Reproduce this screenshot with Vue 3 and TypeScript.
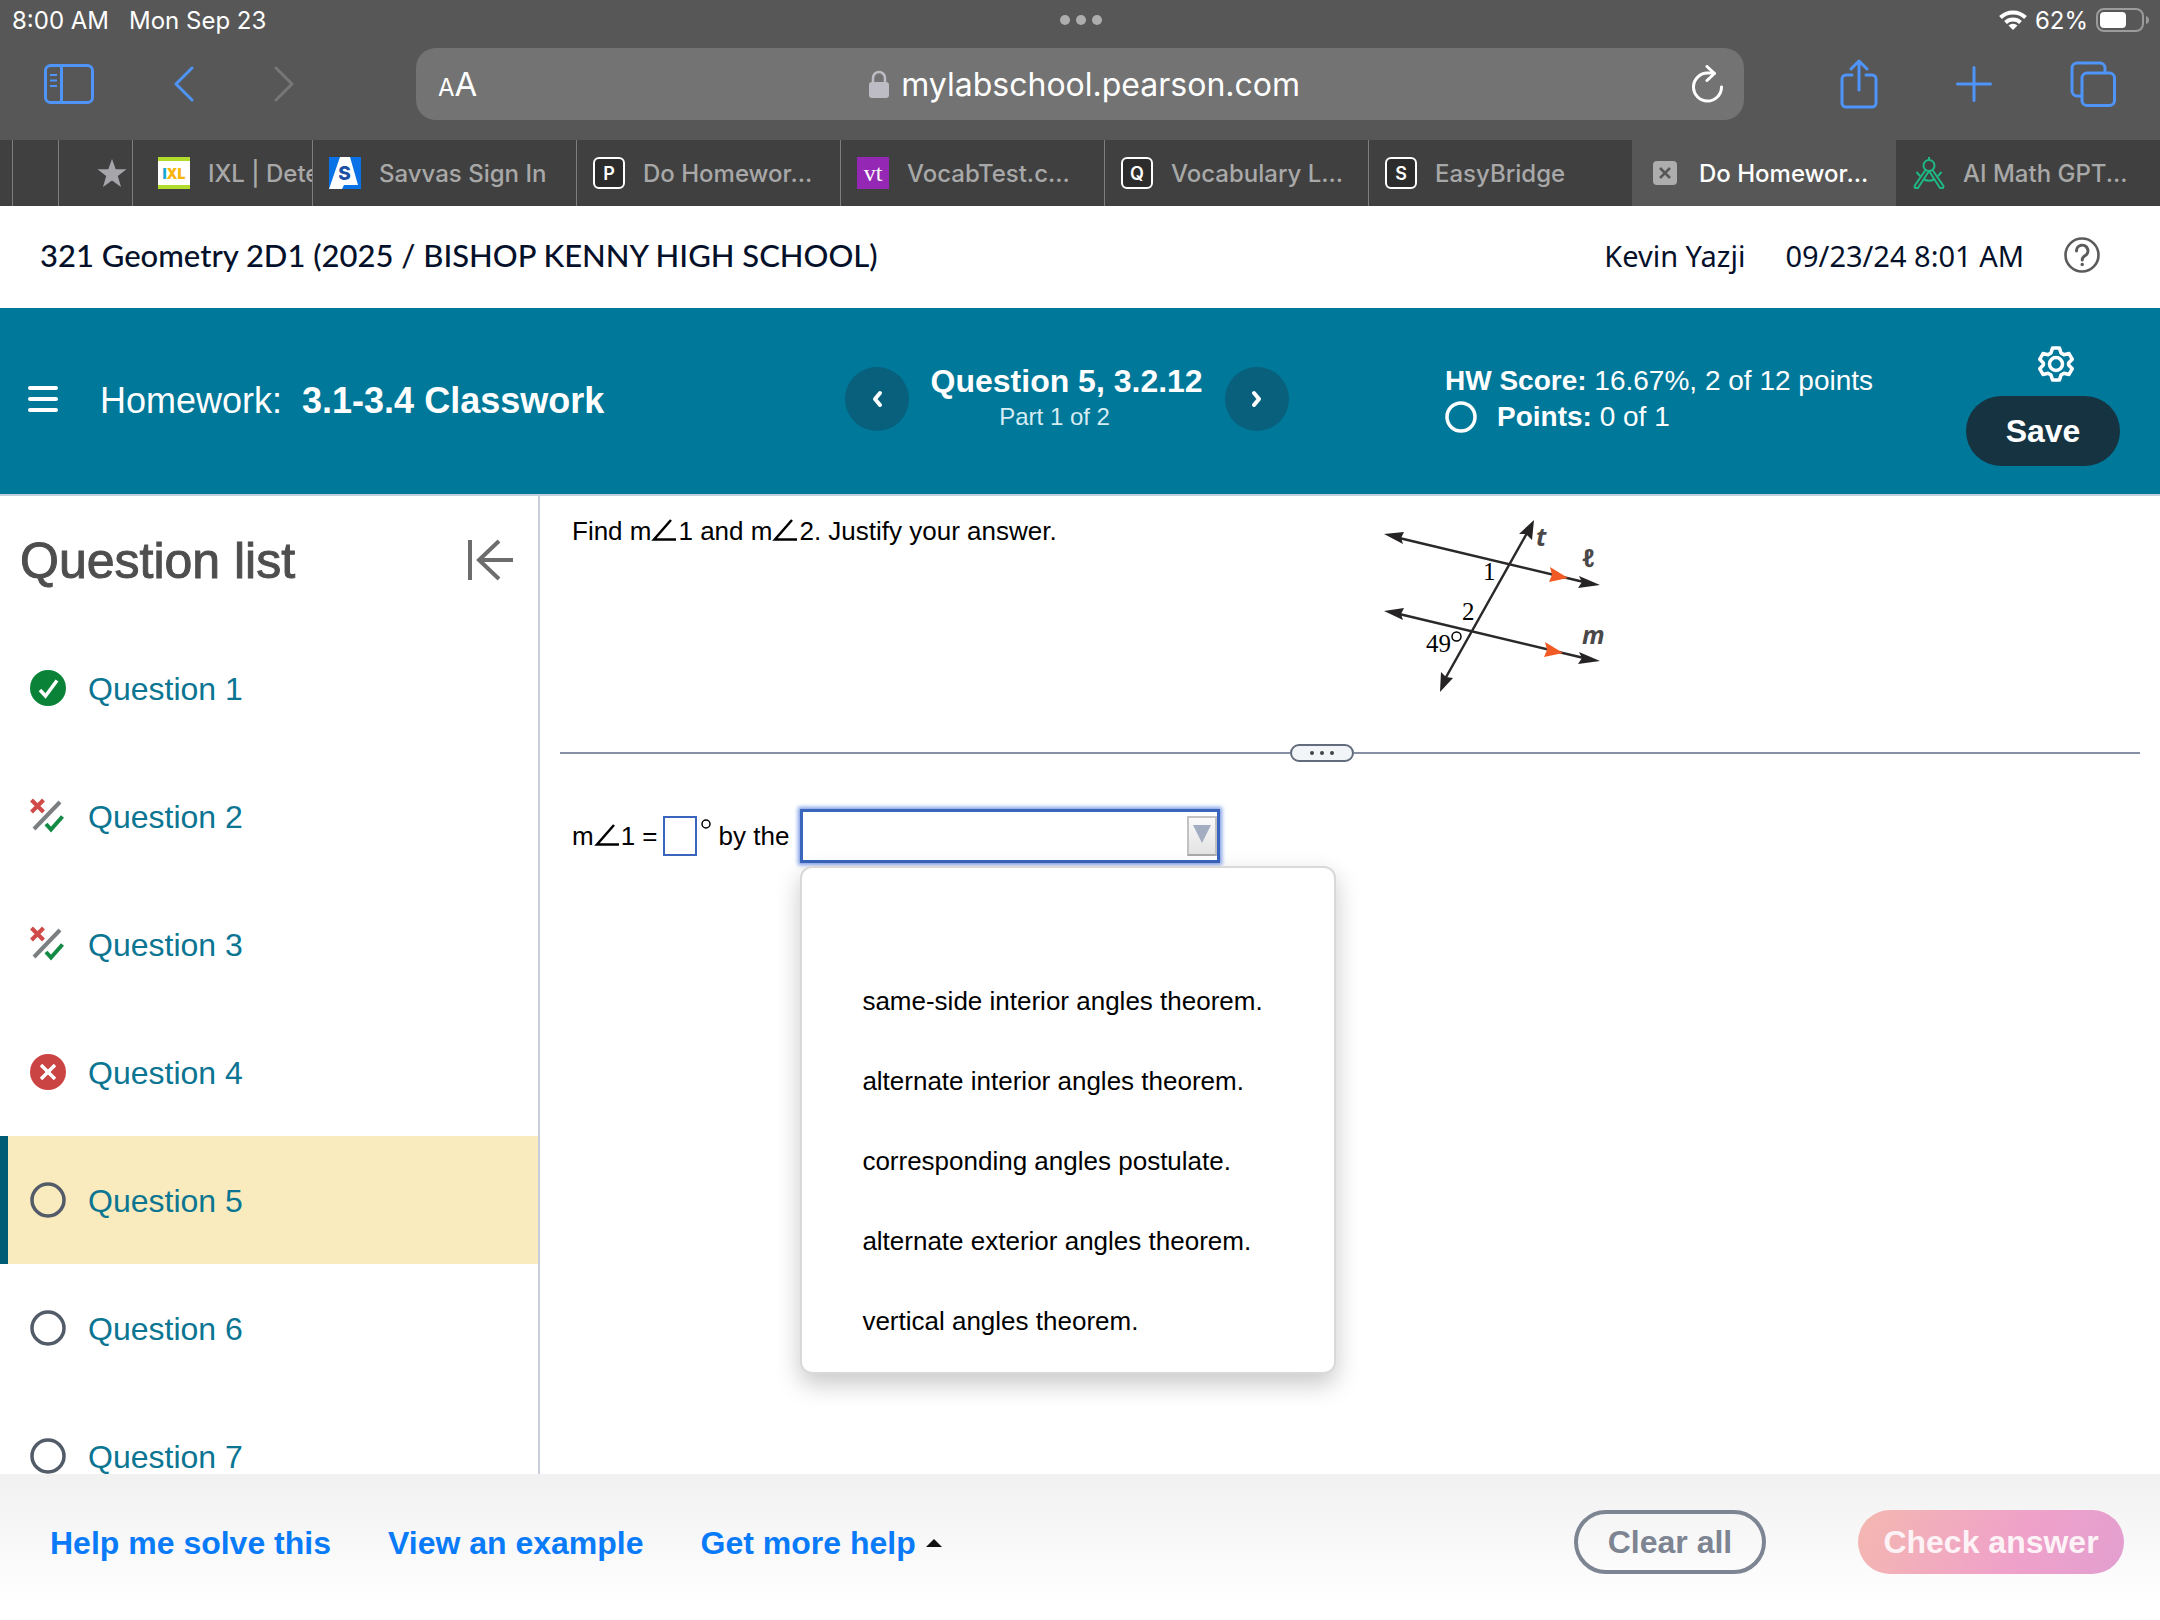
<script setup lang="ts">
import { ref } from 'vue'

type Status = 'correct' | 'partial' | 'wrong' | 'open'
interface Question { id: number; status: Status }
interface Tab { kind: string; label: string; letter?: string }

const tabs: Tab[] = [
  { kind: 'savvas', label: 'Savvas Sign In' },
  { kind: 'letter', letter: 'P', label: 'Do Homewor...' },
  { kind: 'vt', label: 'VocabTest.c...' },
  { kind: 'letter', letter: 'Q', label: 'Vocabulary L...' },
  { kind: 'letter', letter: 'S', label: 'EasyBridge' },
  { kind: 'active', label: 'Do Homewor...' },
  { kind: 'compass', label: 'AI Math GPT...' },
]

const questions: Question[] = [
  { id: 1, status: 'correct' },
  { id: 2, status: 'partial' },
  { id: 3, status: 'partial' },
  { id: 4, status: 'wrong' },
  { id: 5, status: 'open' },
  { id: 6, status: 'open' },
  { id: 7, status: 'open' },
]
const current = ref(5)

const options: string[] = [
  '',
  'same-side interior angles theorem.',
  'alternate interior angles theorem.',
  'corresponding angles postulate.',
  'alternate exterior angles theorem.',
  'vertical angles theorem.',
]
const reason = ref('')
const angle = ref('')
</script>

<template>
  <div class="app">
    <header class="browser">
      <div class="status">
        <div class="clock"><span>8:00 AM</span><span>Mon Sep 23</span></div>
        <div class="dots"><i></i><i></i><i></i></div>
        <div class="power">
          <svg width="28" height="20" viewBox="0 0 28 20" fill="none" stroke="#fff" stroke-width="4">
            <path d="M1.5 7.5a18 18 0 0 1 25 0" />
            <path d="M6.5 12.5a11 11 0 0 1 15 0" />
            <path d="M14 20l-4.500-4.500a6.500 6.500 0 0 1 9 0z" fill="#fff" stroke="none" />
          </svg>
          <span>62%</span>
          <svg width="54" height="24" viewBox="0 0 54 24">
            <rect x="1" y="1" width="46" height="22" rx="7" fill="none" stroke="#9b9b9b" stroke-width="2" />
            <rect x="4" y="4" width="26" height="16" rx="4" fill="#fff" />
            <path d="M50 8q3 1 3 4t-3 4z" fill="#9b9b9b" />
          </svg>
        </div>
      </div>

      <div class="toolbar">
        <div class="nav-left">
          <button aria-label="Sidebar">
            <svg width="50" height="40" viewBox="0 0 50 40" fill="none" stroke="#4f94f8" stroke-width="3">
              <rect x="1.5" y="1.5" width="47" height="37" rx="5" />
              <path d="M17.5 2v36" /><path d="M6 11h7M6 16.500h7M6 22h7" stroke-width="2" />
            </svg>
          </button>
          <button aria-label="Back">
            <svg width="20" height="36" viewBox="0 0 20 36" fill="none" stroke="#4f94f8" stroke-width="3" stroke-linecap="round" stroke-linejoin="round"><path d="M18 2L2 18l16 16" /></svg>
          </button>
          <button aria-label="Forward">
            <svg width="20" height="36" viewBox="0 0 20 36" fill="none" stroke="#777" stroke-width="3" stroke-linecap="round" stroke-linejoin="round"><path d="M2 2l16 16L2 34" /></svg>
          </button>
        </div>
        <div class="address">
          <button class="reader" aria-label="Page settings"><small>A</small>A</button>
          <div class="host">
            <svg width="20" height="28" viewBox="0 0 20 28"><path d="M4 13V8a6 6 0 0 1 12 0v5" fill="none" stroke="#bdbcc4" stroke-width="2.500" /><rect y="12" width="20" height="16" rx="3" fill="#bdbcc4" /></svg>
            <span>mylabschool.pearson.com</span>
          </div>
          <button aria-label="Reload">
            <svg width="32" height="38" viewBox="0 0 32 38" fill="none" stroke="#fff" stroke-width="3" stroke-linecap="round" stroke-linejoin="round"><path d="M29.500 22a14 14 0 1 1-13.500-14h6" /><path d="M15 1.500L22.500 8.500 15 15.500" /></svg>
          </button>
        </div>
        <div class="nav-right">
          <button aria-label="Share">
            <svg width="38" height="50" viewBox="0 0 38 50" fill="none" stroke="#4f94f8" stroke-width="3" stroke-linecap="round" stroke-linejoin="round"><path d="M12 16H6a4 4 0 0 0-4 4v24a4 4 0 0 0 4 4h26a4 4 0 0 0 4-4V20a4 4 0 0 0-4-4h-6" /><path d="M19 31V2M11 10l8-8 8 8" /></svg>
          </button>
          <button aria-label="New tab">
            <svg width="36" height="36" viewBox="0 0 36 36" fill="none" stroke="#4f94f8" stroke-width="3" stroke-linecap="round"><path d="M18 1.500v33M1.500 18h33" /></svg>
          </button>
          <button aria-label="Show tabs">
            <svg width="46" height="46" viewBox="0 0 46 46" fill="none" stroke="#4f94f8" stroke-width="3"><rect x="12" y="12" width="32.500" height="32.500" rx="5" /><path d="M12 35H7a5 5 0 0 1-5-5V7a5 5 0 0 1 5-5h23a5 5 0 0 1 5 5v5" /></svg>
          </button>
        </div>
      </div>

      <nav class="tabs">
        <span class="tab stub-a"></span>
        <span class="tab stub-b"></span>
        <a href="#" class="tab star" aria-label="Favorites">
          <svg width="30" height="28" viewBox="0 0 30 28"><path d="M15 0l3.700 10.200H29.500L20.800 17l3.200 11L15 21.500 6 28l3.200-11L.5 10.200h10.800z" fill="#a5a5aa" /></svg>
        </a>
        <a href="#" class="tab ixl">
          <span class="fav fav-ixl"><b>I</b><b>X</b><b>L</b></span>
          <span class="label">IXL | Dete</span>
        </a>
        <a v-for="(t, i) in tabs" :key="i" href="#" class="tab page" :class="{ active: t.kind === 'active' }">
          <svg v-if="t.kind === 'savvas'" class="fav" viewBox="0 0 32 32">
            <rect width="32" height="32" fill="#0872e6" />
            <path d="M11 0h10l8 28H15l-2 4H0z" fill="#fff" />
            <text x="15.500" y="23" text-anchor="middle" font-family="Inter, sans-serif" font-weight="800" font-size="19" fill="#1b4fa5">S</text>
          </svg>
          <span v-else-if="t.kind === 'letter'" class="fav fav-letter">{{ t.letter }}</span>
          <span v-else-if="t.kind === 'vt'" class="fav fav-vt">vt</span>
          <svg v-else-if="t.kind === 'active'" class="close" viewBox="0 0 24 24"><rect width="24" height="24" rx="4" fill="#adadad" /><path d="M7 7l10 10M17 7L7 17" stroke="#575757" stroke-width="2.500" /></svg>
          <svg v-else class="fav" viewBox="0 0 32 32" fill="none" stroke="#1fb783" stroke-width="2" stroke-linejoin="round">
            <path d="M16 0v3" /><circle cx="16" cy="8.500" r="5.500" />
            <path d="M12.500 13L1.500 29l.5 2h3l11-17 11 17h3l.5-2L19.500 13M11 22.500q5 2.500 10 0M7 19l-3.500-4M25 19l3.500-4" />
          </svg>
          <span class="label">{{ t.label }}</span>
        </a>
      </nav>
    </header>

    <section class="course">
      <h1>321 Geometry 2D1 (2025 / BISHOP KENNY HIGH SCHOOL)</h1>
      <div class="user">
        <span>Kevin Yazji</span>
        <span>09/23/24 8:01 AM</span>
        <button aria-label="Help">
          <svg width="36" height="36" viewBox="0 0 36 36" fill="none" stroke="#5b5b5b" stroke-width="2.600"><circle cx="18" cy="18" r="16.500" /><path d="M12.500 14a5.700 5.700 0 1 1 8.500 4.800q-2.800 1.600-2.800 4.200" stroke-width="3" stroke-linecap="round" /><circle cx="18.200" cy="27.500" r="1" fill="#5b5b5b" stroke-width="1.500" /></svg>
        </button>
      </div>
    </section>

    <section class="assignment">
      <div class="hw">
        <button aria-label="Menu"><svg width="30" height="28" viewBox="0 0 30 28" stroke="#fff" stroke-width="4" stroke-linecap="round"><path d="M2 3h26M2 14h26M2 25h26" /></svg></button>
        <h2><span>Homework:</span><b>3.1-3.4 Classwork</b></h2>
      </div>
      <div class="pager">
        <button class="round" aria-label="Previous question"><svg width="12" height="18" viewBox="0 0 12 18" fill="none" stroke="#fff" stroke-width="4" stroke-linecap="round" stroke-linejoin="round"><path d="M9 3L4 9l5 6" /></svg></button>
        <div class="where"><b>Question 5, 3.2.12</b><span>Part 1 of 2</span></div>
        <button class="round" aria-label="Next question"><svg width="12" height="18" viewBox="0 0 12 18" fill="none" stroke="#fff" stroke-width="4" stroke-linecap="round" stroke-linejoin="round"><path d="M3 3l5 6-5 6" /></svg></button>
      </div>
      <div class="score">
        <span><b>HW Score:</b> 16.67%, 2 of 12 points</span>
        <span class="points"><svg width="32" height="32" viewBox="0 0 32 32"><circle cx="16" cy="16" r="14" fill="none" stroke="#fff" stroke-width="3.500" /></svg><span><b>Points:</b> 0 of 1</span></span>
      </div>
      <div class="actions">
        <button class="gear" aria-label="Settings">
          <svg width="36" height="36" viewBox="0 0 36 36" fill="none" stroke="#fff" stroke-width="3.500" stroke-linejoin="round"><path d="M14.500 2h7l1.500 5 3 1.800 5-1.300 3.300 5.800-3.700 3.700v2l3.700 3.700-3.300 5.800-5-1.300-3 1.800-1.500 5h-7l-1.500-5-3-1.800-5 1.300-3.300-5.800 3.700-3.700v-2l-3.700-3.700L5 7.500l5 1.300L13 7z" /><circle cx="18" cy="18" r="6.500" /></svg>
        </button>
        <button class="save">Save</button>
      </div>
    </section>

    <div class="workspace">
      <aside class="list">
        <div class="list-head">
          <h3>Question list</h3>
          <button aria-label="Collapse list"><svg width="46" height="42" viewBox="0 0 46 42" fill="none" stroke="#6d6d6d" stroke-width="4"><path d="M2 1v40M45 21H10M31 2L11 21l20 19" /></svg></button>
        </div>
        <ul>
          <li v-for="q in questions" :key="q.id" :class="{ current: q.id === current }">
            <svg v-if="q.status === 'correct'" viewBox="0 0 36 36"><circle cx="18" cy="18" r="18" fill="#0a8338" /><path d="M10 20l5.500 6L27 10.500" fill="none" stroke="#fff" stroke-width="3.500" /></svg>
            <svg v-else-if="q.status === 'partial'" viewBox="0 0 36 36" fill="none" stroke-width="4"><path d="M1.500 2l12 12M13.500 2l-12 12" stroke="#cf4a48" /><path d="M30 4L4 31" stroke="#7b7f82" /><path d="M16 26l5 5.500L32.500 18.500" stroke="#138b45" /></svg>
            <svg v-else-if="q.status === 'wrong'" viewBox="0 0 36 36"><circle cx="18" cy="18" r="18" fill="#ca4443" /><path d="M11 11l14 14M25 11L11 25" stroke="#fff" stroke-width="3.500" /></svg>
            <svg v-else viewBox="0 0 36 36"><circle cx="18" cy="18" r="16" fill="none" stroke="#525b68" stroke-width="3.500" /></svg>
            <a href="#" @click.prevent="current = q.id">Question {{ q.id }}</a>
          </li>
        </ul>
      </aside>

      <main>
        <div class="problem">
          <p>Find m<svg class="ang" viewBox="0 0 26 22"><path d="M20 1L3 20.500H25" /></svg>1 and m<svg class="ang" viewBox="0 0 26 22"><path d="M20 1L3 20.500H25" /></svg>2. Justify your answer.</p>
          <svg class="figure" width="280" height="210" viewBox="0 0 280 210" role="img" aria-label="Lines l and m crossed by transversal t">
            <g stroke="#2a2829" stroke-width="2.500">
              <path d="M35 37L228 83M35 113L228 159M167 33L85 179" />
            </g>
            <g fill="#252324">
              <path d="M24 34l20-2-3 6 2 6zM240 85l-21-9 3 6-4 6zM24 111l20-3-3 6 2 6zM240 161l-21-9 3 6-4 6zM174 20l-15 14 7 0 6 6zM80 192l1-20 5 5 7 1z" />
            </g>
            <path d="M190 67l18 11-19 4 3-7zM185 142l18 11-19 4 3-7z" fill="#f15a24" />
            <g font-family="'Liberation Serif', serif" font-size="25" fill="#000">
              <text x="123" y="80">1</text><text x="102" y="120">2</text><text x="66" y="152">49</text>
            </g>
            <circle cx="96.500" cy="136.500" r="4.500" fill="none" stroke="#000" stroke-width="1.500" />
            <g font-family="'Open Sans', 'DejaVu Sans', sans-serif" font-style="italic" font-weight="700" font-size="25" fill="#4a4849">
              <text x="176" y="46">t</text><text x="222" y="67">ℓ</text><text x="222" y="144">m</text>
            </g>
          </svg>
        </div>

        <div class="splitter">
          <hr class="before" />
          <button aria-label="Resize panes"><i></i><i></i><i></i></button>
          <hr class="after" />
        </div>

        <form class="answer" @submit.prevent>
          <label for="angle-one">m<svg class="ang" viewBox="0 0 26 22"><path d="M20 1L3 20.500H25" /></svg>1 =</label>
          <input id="angle-one" v-model="angle" type="text" />
          <svg class="degree" width="10" height="10" viewBox="0 0 10 10"><circle cx="5" cy="5" r="4" fill="none" stroke="#000" stroke-width="1.500" /></svg>
          <label for="reason">by the</label>
          <div class="combo">
            <select id="reason" v-model="reason">
              <option v-for="o in options" :key="o" :value="o">{{ o }}</option>
            </select>
            <span class="arrow"><svg width="18" height="18" viewBox="0 0 18 18"><path d="M0 0h18L9 18z" fill="#a3adc2" /></svg></span>
            <ul class="menu" role="listbox" aria-label="Reason">
              <li v-for="o in options" :key="o" role="option" :aria-selected="o === reason" @click="reason = o">{{ o }}</li>
            </ul>
          </div>
        </form>
      </main>
    </div>

    <footer>
      <nav class="help">
        <a href="#">Help me solve this</a>
        <a href="#">View an example</a>
        <a href="#" class="more">Get more help<svg width="16" height="8" viewBox="0 0 16 8"><path d="M0 8L8 0l8 8z" fill="#111" /></svg></a>
      </nav>
      <div class="submit">
        <button class="clear">Clear all</button>
        <button class="check">Check answer</button>
      </div>
    </footer>
  </div>
</template>

<style>
body { margin: 0; }
</style>

<style scoped>
* { box-sizing: border-box; }
.app { display: flex; flex-direction: column; height: 100vh; overflow: hidden; background: #fff; font-family: "Liberation Sans", Arial, sans-serif; font-size: 26px; color: #000; }
button { border: 0; padding: 0; background: none; font: inherit; color: inherit; display: flex; align-items: center; justify-content: center; }
svg { display: block; flex: none; }
a { text-decoration: none; }
h1, h2, h3, p, ul { margin: 0; padding: 0; }
ul { list-style: none; }

.browser { flex: none; background: #575757; color: #fff; font-family: Inter, "Noto Sans", sans-serif; }
.status { display: grid; grid-template-columns: 1fr auto 1fr; align-items: center; height: 40px; padding: 0 10px 0 12px; font-size: 24px; }
.clock { display: flex; gap: 20px; }
.dots { display: flex; gap: 6px; }
.dots i { width: 10px; height: 10px; border-radius: 50%; background: #adadad; }
.power { display: flex; align-items: center; justify-content: flex-end; gap: 8px; }
.toolbar { display: flex; align-items: center; height: 100px; padding: 0 44px 12px; }
.nav-left { display: flex; align-items: center; gap: 80px; margin-right: 122px; }
.nav-right { display: flex; align-items: center; gap: 78px; margin-left: 96px; }
.address { flex: 1; display: flex; align-items: center; justify-content: space-between; height: 72px; padding: 0 20px 0 22px; border-radius: 20px; background: #737373; }
.reader { align-items: baseline; font-size: 33px; }
.reader small { font-size: 24px; }
.host { display: flex; align-items: center; gap: 12px; font-size: 32px; }
.tabs { display: flex; height: 66px; overflow: hidden; background: #404040; }
.tab { flex: none; display: flex; align-items: center; height: 66px; border-left: 1px solid #7d7d7d; color: #a8a8a8; font-size: 24px; font-weight: 500; overflow: hidden; white-space: nowrap; }
.tab.stub-a { width: 12px; border-left: 0; }
.tab.stub-b { width: 46px; }
.tab.star { width: 74px; padding-left: 38px; }
.tab.ixl { width: 180px; padding-left: 25px; gap: 18px; }
.ixl .label { min-width: 0; overflow: hidden; }
.tab.page { flex: 1 1 200px; min-width: 0; padding-left: 16px; gap: 18px; }
.tab.active { background: #575757; border-left-color: #575757; color: #fff; padding-left: 20px; gap: 22px; }
.tab.active + .tab { border-left-color: #404040; }
.fav { flex: none; width: 32px; height: 32px; }
.close { width: 24px; height: 24px; }
.fav-ixl { display: flex; align-items: center; justify-content: center; background: #fff; border-top: 4px solid #b2dc2b; border-bottom: 4px solid #b2dc2b; font-size: 14px; font-weight: 900; color: #f7b50c; }
.fav-ixl b:first-child { color: #18a6d2; }
.fav-letter { display: flex; align-items: center; justify-content: center; border: 2px solid #fff; border-radius: 6px; background: #2c2c2c; color: #fff; font-size: 18px; font-weight: 600; }
.fav-vt { display: flex; align-items: center; justify-content: center; background: #9428b4; color: #fff; font-family: "Liberation Serif", serif; font-size: 24px; line-height: 28px; }

.course { flex: none; display: flex; align-items: center; justify-content: space-between; height: 102px; padding: 0 60px 4px 40px; color: #05112a; }
.course h1 { font-family: Lato, sans-serif; font-size: 31px; font-weight: 500; }
.user { display: flex; align-items: center; gap: 40px; font-family: "Noto Sans", sans-serif; font-size: 29px; }

.assignment { flex: none; display: grid; grid-template-columns: 39.1% 27.8% 1fr auto; align-items: center; height: 188px; padding-bottom: 4px; border-bottom: 2px solid #c3d0de; background: #007899; color: #fff; }
.hw { display: flex; align-items: center; gap: 42px; padding-left: 28px; }
.hw h2 { display: flex; gap: 20px; padding-top: 4px; font-size: 36px; font-weight: 400; line-height: 40px; }
.pager { display: flex; align-items: center; gap: 22px; }
.round { width: 64px; height: 64px; border-radius: 50%; background: #08607c; }
.where { display: flex; flex-direction: column; align-items: center; font-size: 32px; line-height: 36px; }
.where span { padding-right: 24px; font-size: 24px; color: #d6ecf3; }
.score { display: flex; flex-direction: column; font-size: 28px; line-height: 36px; }
.points { display: flex; align-items: center; gap: 20px; }
.actions { align-self: start; display: flex; flex-direction: column; align-items: flex-end; gap: 14px; padding: 38px 40px 0 0; }
.gear { margin-right: 46px; }
.save { width: 154px; height: 70px; border-radius: 35px; background: #163342; font-size: 32px; font-weight: 700; }

.workspace { flex: 1; min-height: 0; display: flex; overflow: hidden; }
.list { flex: none; width: 25%; border-right: 2px solid #c8cfdb; overflow: hidden; }
.list-head { display: flex; align-items: center; justify-content: space-between; height: 128px; padding: 0 24px 0 20px; }
.list h3 { padding-top: 2px; font-size: 50px; font-weight: 400; color: #4e4e4e; -webkit-text-stroke: 1px #4e4e4e; }
.list li { display: flex; align-items: center; gap: 22px; height: 128px; padding-left: 30px; font-size: 32px; }
.list li svg { width: 36px; height: 36px; }
.list li.current { padding-left: 22px; border-left: 8px solid #005c74; background: #f9ebbd; }
.list a { padding-top: 2px; color: #0b7592; }

main { flex: 1; min-width: 0; padding: 0 20px; }
.problem { display: grid; grid-template-columns: 1fr 1fr; min-height: 248px; }
.problem p { padding: 17px 0 0 12px; line-height: 36px; }
.figure { margin: 4px 0 0 10px; }
.ang { display: inline-block; width: 26px; height: 22px; margin-right: 1px; vertical-align: -1px; fill: none; stroke: #000; stroke-width: 2.5; }
.splitter { display: flex; align-items: center; }
.splitter hr { margin: 0; border: 0; height: 2px; background: #868fa3; }
.before { flex: 13; }
.after { flex: 14; }
.splitter button { width: 64px; height: 18px; gap: 6px; border: 2px solid #626c7c; border-radius: 9px; background: #f1f5f7; }
.splitter i { width: 4px; height: 4px; border-radius: 50%; background: #444; }
.answer { display: flex; align-items: center; padding: 47px 0 0 12px; white-space: nowrap; }
.answer input { width: 34px; height: 40px; margin-left: 5px; padding: 0; border: 2px solid #3965bd; border-radius: 0; outline: 0; background: #fff; font: inherit; text-align: center; }
.degree { align-self: flex-start; margin: 10px 8px 0 4px; }
.combo { position: relative; margin-left: 11px; }
.combo select { display: block; width: 420px; height: 54px; padding: 0 12px; border: 3px solid #3965bd; border-radius: 0; background: #fff; box-shadow: 0 0 4px 2px #7f9fe6; appearance: none; font: inherit; }
.arrow { position: absolute; top: 7px; right: 3px; width: 30px; height: 40px; padding: 7px 4px; border: 2px solid #c2c2c2; border-bottom-color: #a9a9a9; background: linear-gradient(#fafafa, #e3e3e3); pointer-events: none; }
.menu { position: absolute; top: 57px; left: 0; width: 536px; padding: 13px 0 11px; border: 2px solid #d9d9d9; border-radius: 12px; background: #fff; box-shadow: 0 10px 24px rgba(0, 0, 0, .22); }
.menu li { height: 80px; padding-left: 60px; line-height: 80px; }

footer { flex: none; display: flex; align-items: center; justify-content: space-between; height: 146px; padding: 0 36px 10px 50px; background: linear-gradient(#f1f1f1, #fff 90%); font-size: 32px; font-weight: 700; }
.help { display: flex; gap: 57px; padding-top: 2px; }
.help a { color: #0a7bf8; }
.more { display: flex; align-items: center; gap: 10px; }
.submit { display: flex; gap: 92px; }
.submit button { height: 64px; border-radius: 32px; }
.clear { width: 192px; border: 4px solid #7d8492; color: #7d8492; }
.check { width: 266px; background: linear-gradient(115deg, #f4b8b0, #efa1c9 60%, #e29fd0); color: #fdf3f7; }
</style>
